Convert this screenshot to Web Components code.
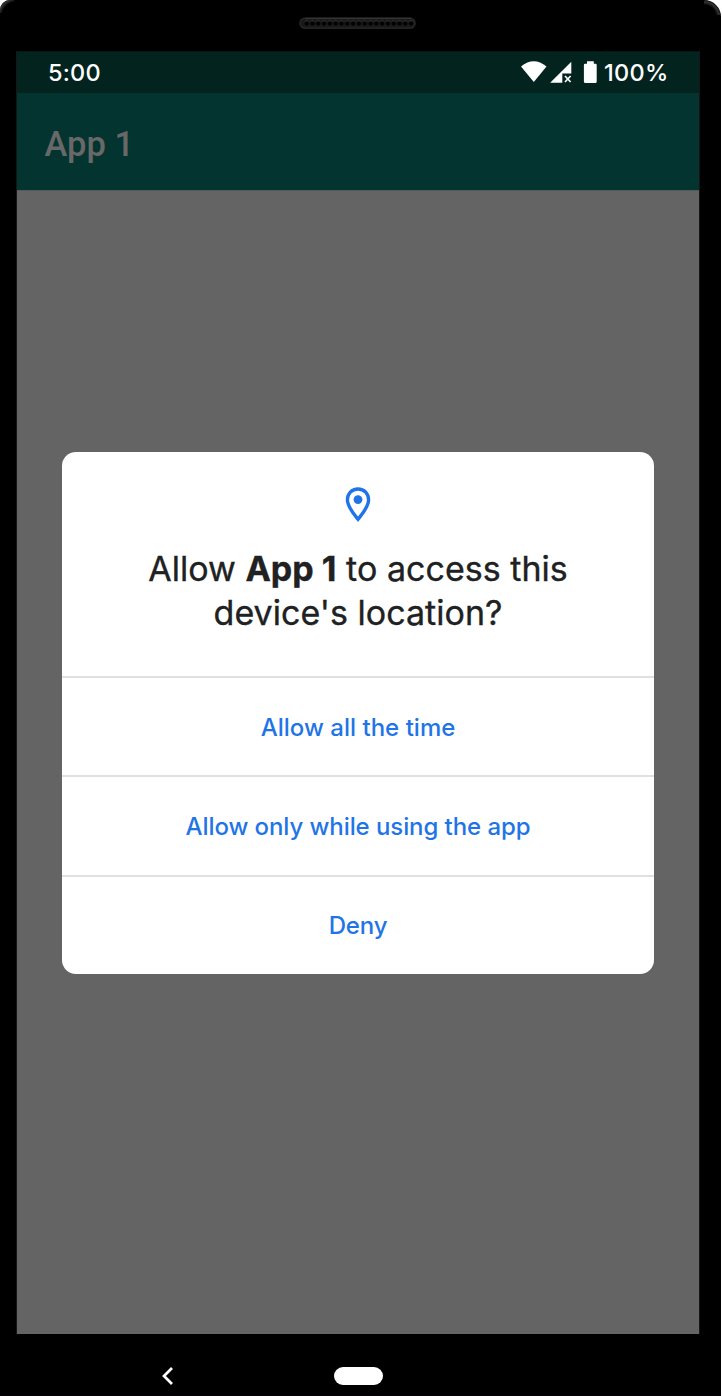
<!DOCTYPE html>
<html lang="en">
<head>
<meta charset="utf-8">
<title>App 1</title>
<style>
html,body{margin:0;background:#fff}
body{width:722px;height:1396px;overflow:hidden}
</style>
</head>
<body>
<phone-frame>
  <status-bar time="5:00" battery="100%"></status-bar>
  <app-bar>App 1</app-bar>
  <permission-dialog>
    <span slot="lead">Allow <b>App 1</b> to access this</span>
    <span slot="rest">device's location?</span>
    <dialog-action slot="actions" style="--track:.02px">Allow all the time</dialog-action>
    <dialog-action slot="actions" style="--track:-.08px">Allow only while using the app</dialog-action>
    <dialog-action slot="actions" style="--track:-.2px">Deny</dialog-action>
  </permission-dialog>
  <nav-bar slot="nav"></nav-bar>
</phone-frame>
<script>
function define(name, html) {
  customElements.define(name, class extends HTMLElement {
    constructor() {
      super();
      const t = document.createElement('template');
      t.innerHTML = html;
      this.attachShadow({mode: 'open'}).append(t.content.cloneNode(true));
    }
    connectedCallback() {
      this.shadowRoot.querySelectorAll('[data-attr]').forEach(n => {
        n.textContent = this.getAttribute(n.dataset.attr);
      });
    }
  });
}

define('speaker-grille', `
<style>:host{display:block;width:118px;height:12px}svg{display:block}</style>
<svg width="118" height="12" viewBox="0 0 118 12">
  <defs><pattern id="holes" x="4.8" y="0" width="5.8" height="12" patternUnits="userSpaceOnUse">
    <circle cx="2.9" cy="6.6" r="2.100" fill="#000"/><path d="M.7 4.400a3 3 0 0 1 4.400 0" fill="none" stroke="#303030" stroke-width=".8"/>
  </pattern></defs>
  <rect x=".8" y="1.200" width="115.400" height="10" rx="5" fill="#191919" stroke="#2a2a2a" stroke-width="1.200"/>
  <path d="M6 1.300h106" stroke="#3a3a3a"/>
  <rect x="4.800" y="0" width="110.200" height="12" fill="url(#holes)"/>
</svg>`);

define('phone-frame', `
<style>
:host{display:flex;flex-direction:column;box-sizing:border-box;width:721px;height:1396px;background:#000;border-radius:10px 17px 0 0;
 box-shadow:inset 0 -1px #0a0308}
.top{height:51px;flex:none;box-sizing:border-box;padding:17px 0 0 299px;border-radius:inherit;
 background:radial-gradient(circle at 16px 16px,transparent 14px,#333 17px,#222 19px,transparent 20px) 0 0/14px 13px no-repeat,
 radial-gradient(circle at 0 17px,transparent 12px,#333 15px,#222 16px,transparent 17px) 704px 0/17px 15px no-repeat}
.screen{display:flex;flex-direction:column;margin-left:17px;width:682px;height:1283px;flex:none;background:#646464;box-shadow:1px 0 #161616,-1px 0 #161616}
</style>
<div class="top"><speaker-grille></speaker-grille></div>
<div class="screen"><slot></slot></div>
<slot name="nav"></slot>`);

define('status-bar', `
<style>
:host{display:flex;align-items:center;box-sizing:border-box;height:42px;padding:0 31px;flex:none;background:#03231e;color:#fff;
 border-top:1px solid #021814;font:500 23.5px/28px Inter,sans-serif}
.time{flex:1;letter-spacing:.2px}
svg{display:block;flex:none}
.pct{width:64px;white-space:nowrap;margin-left:7px;letter-spacing:.3px}
</style>
<span class="time" data-attr="time"></span>
<svg width="77" height="24" viewBox="0 0 77 24" fill="#fff">
  <path d="M1 5.500Q13.700-5 26.500 5.500L13.800 21.100Z"/>
  <path d="M51.300 .7V12.500H42.300V21.800H30.200Z"/>
  <path d="M45 15l5.600 6M50.600 15l-5.600 6" fill="none" stroke="#fff" stroke-width="1.700"/>
  <path d="M67 .3h6.800v2.500h1.700q1.200 0 1.200 1.200V20.500q0 1.500-1.400 1.500H65.300q-1.400 0-1.400-1.500V4q0-1.200 1.200-1.200H67Z"/>
</svg>
<span class="pct" data-attr="battery"></span>`);

define('app-bar', `
<style>
:host{display:flex;align-items:center;box-sizing:border-box;height:97px;flex:none;padding:4px 27.5px 0;background:#03342f;color:#686868;
 font:500 34.5px/42px Roboto,sans-serif;box-shadow:0 1px #555b5a}
</style>
<slot></slot>`);

define('location-pin', `
<style>:host{display:block;width:26px;height:36px}svg{display:block}</style>
<svg width="26" height="36" viewBox="0 0 26 36">
  <path d="M13 2C6.700 2 2.400 6.700 2.400 12.800C2.400 20 9.200 27.500 13 32.300C16.800 27.500 23.600 20 23.600 12.800C23.600 6.700 19.300 2 13 2Z" fill="none" stroke="#1f75e7" stroke-width="3.400"/>
  <circle cx="13" cy="12.600" r="4.400" fill="#1f75e7"/>
</svg>`);

define('permission-dialog', `
<style>
:host{display:flex;flex-direction:column;width:592px;height:522px;margin:262px 0 0 45px;background:#fff;border-radius:14px;overflow:hidden}
.head{display:flex;flex-direction:column;align-items:center;height:224px;flex:none;box-sizing:border-box;padding-top:35px}
h1{margin:24px 0 0;font:400 34px/44px Inter,sans-serif;color:#202122;text-align:center;-webkit-text-stroke:.35px #202122}
h1 div{white-space:nowrap}
.lead{letter-spacing:.02px}
.rest{letter-spacing:.02px}
</style>
<div class="head"><location-pin></location-pin>
<h1><div class="lead"><slot name="lead"></slot></div><div class="rest"><slot name="rest"></slot></div></h1></div>
<slot name="actions"></slot>`);

define('dialog-action', `
<style>
:host{display:flex;flex:1;align-items:center;justify-content:center;box-sizing:border-box;padding-top:2px;border-top:2px solid #dfe0e0;color:#1f75e7;
 font:500 24px/30px Inter,sans-serif;letter-spacing:var(--track,0)}
</style>
<slot></slot>`);

define('nav-bar', `
<style>
:host{display:flex;align-items:center;height:62px;box-sizing:border-box;padding:22px 0 0 161px}
svg{display:block}
.home{width:49px;height:18px;border-radius:9px;background:#fff;margin-left:159px}
</style>
<svg width="14" height="20" viewBox="0 0 14 20"><path d="M11 2L3 10L11 18" fill="none" stroke="#fff" stroke-width="2.700"/></svg>
<div class="home"></div>`);
</script>
</body>
</html>
